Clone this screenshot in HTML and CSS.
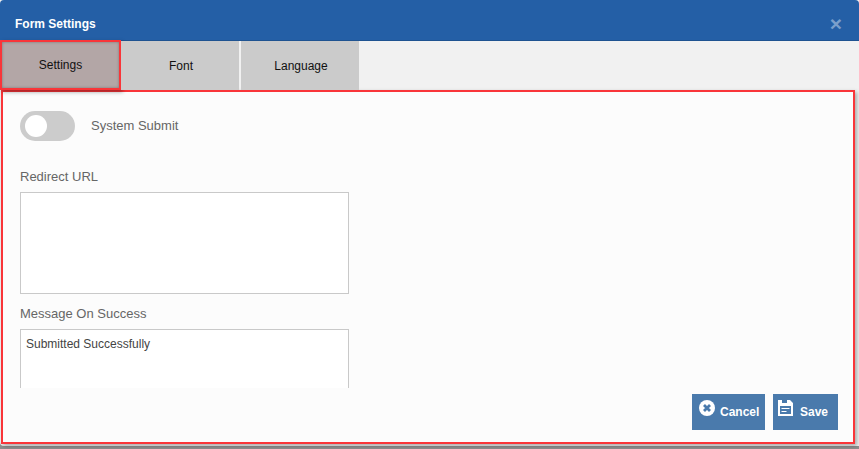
FILE: index.html
```html
<!DOCTYPE html>
<html lang="en">
<head>
    <meta charset="UTF-8">
    <title>Form Settings</title>
    <link rel="stylesheet" href="styles.css">
</head>
<body>
    <div class="modal">
        <div class="modal-header">
            <span class="modal-title">Form Settings</span>
            <span class="close-button">&times;</span>
        </div>

        <div class="tabs">
            <div class="tab active">Settings</div>
            <div class="tab">Font</div>
            <div class="tab">Language</div>
        </div>

        <div class="panel">
            <div class="form-area">
                <div class="toggle-row">
                    <div class="toggle"><div class="toggle-knob"></div></div>
                    <span class="toggle-label">System Submit</span>
                </div>
                <p class="field-label url-label">Redirect URL</p>
                <div class="text-box url-box"></div>
                <p class="field-label">Message On Success</p>
                <div class="text-box message-box">Submitted Successfully</div>
            </div>
            <div class="actions">
                <button class="action-button cancel-button">
                    <svg class="cancel-icon" viewBox="0 0 16 16" width="16" height="16">
                        <circle cx="8" cy="8" r="8" fill="#fff"/>
                        <path d="M5 5l6 6M11 5l-6 6" stroke="#4a7aac" stroke-width="2.8" fill="none"/>
                    </svg>
                    Cancel
                </button>
                <button class="action-button save-button">
                    <svg class="save-icon" viewBox="0 0 15 16" width="15" height="16">
                        <path d="M0 0h4v3h5V0h3l3 3v13H0z" fill="#fff"/>
                        <path d="M2 6h11v8H2z" fill="#4a7aac"/>
                        <path d="M3.5 8h8v1h-8zM3.5 11h5v1h-5z" fill="#fff"/>
                    </svg>
                    Save
                </button>
            </div>
        </div>
    </div>
</body>
</html>
```

FILE: styles.css
```css
:root {
    --blue: #245fa6;
    --button-blue: #4a7aac;
    --red: #f93539;
    --grey-line: #c9c9c9;
}

html, body {
    margin: 0;
    padding: 0;
    height: 449px;
    overflow: hidden;
    background-color: #8f8f8f;
    font-family: 'Liberation Sans', Arial, sans-serif;
}

.modal {
    width: 859px;
    height: 446px;
    background-color: #f1f1f1;
    display: flex;
    flex-direction: column;
    border-radius: 0 0 0 4px;
}

.modal-header {
    height: 41px;
    flex: none;
    box-sizing: border-box;
    background-color: var(--blue);
    border-bottom: 1px solid #1e5391;
    border-radius: 4px 4px 0 0;
    display: flex;
    align-items: center;
    justify-content: space-between;
    padding: 7px 15px 0;
}

.modal-title {
    color: #fff;
    font-size: 12px;
    font-weight: bold;
}

.close-button {
    color: #7a9fcb;
    font-size: 21px;
    font-weight: bold;
    line-height: 1;
    padding-right: 2px;
}

.tabs {
    height: 49px;
    flex: none;
    display: flex;
    position: relative;
    z-index: 1;
}

.tab {
    width: 118px;
    margin-right: 2px;
    padding-left: 2px;
    box-sizing: border-box;
    background-color: #cbcbcb;
    color: #111;
    font-size: 12px;
    display: flex;
    align-items: center;
    justify-content: center;
}

.tab.active {
    width: 121px;
    height: 50px;
    margin-top: -1px;
    margin-right: 0;
    padding-left: 0;
    background-color: #b3a6a6;
    border: 2px solid var(--red);
    box-shadow: 2px 2px 4px rgba(0, 0, 0, 0.35), inset 0 0 3px rgba(0, 0, 0, 0.3);
}

.panel {
    width: 854px;
    height: 354px;
    margin-left: 1px;
    box-sizing: border-box;
    flex: none;
    background-color: #fcfcfc;
    border: 2px solid var(--red);
    box-shadow: 2px 2px 4px rgba(0, 0, 0, 0.3);
    display: flex;
    flex-direction: column;
}

.form-area {
    height: 296px;
    flex: none;
    box-sizing: border-box;
    overflow: hidden;
    padding: 19px 0 0 17px;
}

.toggle-row {
    display: flex;
    align-items: center;
    height: 30px;
}

.toggle {
    width: 55px;
    height: 30px;
    border-radius: 15px;
    background-color: #ccc;
    display: flex;
    align-items: center;
    padding-left: 5px;
    box-sizing: border-box;
}

.toggle-knob {
    width: 22px;
    height: 22px;
    border-radius: 50%;
    background-color: #fff;
}

.toggle-label {
    margin: -2px 0 0 16px;
    font-size: 13px;
    color: #666;
}

.field-label {
    margin: 0 0 8px;
    font-size: 13px;
    line-height: 15px;
    color: #666;
}

.url-label {
    margin-top: 28px;
}

.text-box {
    width: 329px;
    box-sizing: border-box;
    border: 1px solid var(--grey-line);
    background-color: #fff;
    font-size: 12px;
    color: #444;
}

.url-box {
    height: 102px;
    margin-bottom: 12px;
}

.message-box {
    height: 100px;
    padding: 7px 5px;
}

.actions {
    display: flex;
    justify-content: flex-end;
    gap: 8px;
    padding: 6px 15px 0 0;
}

.action-button {
    height: 36px;
    border: none;
    background-color: var(--button-blue);
    color: #fff;
    font-family: inherit;
    font-size: 12px;
    font-weight: bold;
    padding: 0;
    display: flex;
    align-items: center;
}

.cancel-button {
    width: 73px;
    padding-left: 7px;
}

.save-button {
    width: 65px;
    padding-left: 5px;
}

.action-button svg {
    margin: -8px 5px 0 0;
}

.save-button svg {
    margin-right: 7px;
}
```
